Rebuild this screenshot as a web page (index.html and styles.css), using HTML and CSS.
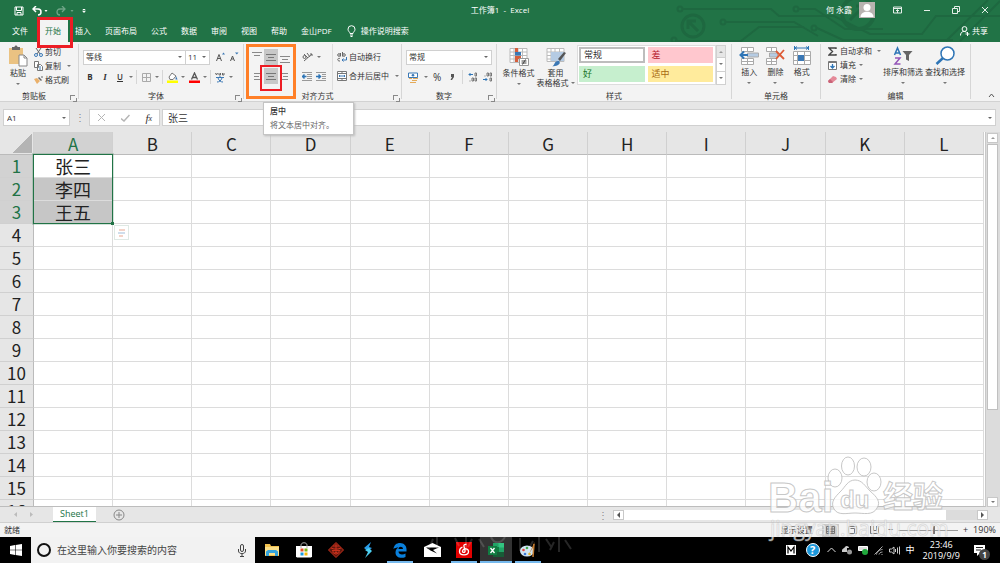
FILE: index.html
```html
<!DOCTYPE html>
<html lang="zh-CN">
<head>
<meta charset="utf-8">
<title>工作簿1 - Excel</title>
<link rel="stylesheet" href="styles.css">
</head>
<body>
<header class="top">
  <svg class="circuit" width="330" height="42" viewBox="0 0 330 42" fill="none" stroke="#1e6840" stroke-width="2">
    <circle cx="23" cy="26" r="11" stroke-width="3"/><path d="M28 31l-9-9M18 29v-8h8" stroke-width="3"/>
    <circle cx="10" cy="9" r="2.5"/><path d="M13 9h88l8 7h55l36 18h52l14-18h64"/>
    <circle cx="53" cy="22" r="2.5"/><path d="M56 22h68l24 14M5 41h66l18-14h45"/><circle cx="4" cy="40" r="2.5"/>
    <circle cx="126" cy="9" r="2.5"/><path d="M129 9h16l30 20h38"/><circle cx="144" cy="28" r="2.5"/>
    <circle cx="188" cy="13" r="16" stroke-width="4"/><path d="M180 20l13-13M186 6h8v8" stroke-width="3"/>
    <path d="M276 41l42-41M290 41l40-40M147 28l26 12h110"/>
  </svg>
  <div class="titlebar">
    <div class="quick">
      <button class="ib" aria-label="保存"><svg width="10" height="10" viewBox="0 0 10 10" fill="none" stroke="#fff"><path d="M1 1h8v8H1zM2.500 1v3.500h5V1M3 9V6.500h4V9"/></svg></button>
      <button class="ib" aria-label="撤消"><svg width="16" height="10" viewBox="0 0 16 10" fill="none" stroke="#fff" stroke-width="1.500"><path d="M4 0L1 3l3 3M1 3h5c4 0 4 6 0 6"/><path d="M12.500 4h3L14 6z" fill="#fff" stroke="none"/></svg></button>
      <button class="ib dim" aria-label="恢复"><svg width="18" height="10" viewBox="0 0 18 10" fill="none" stroke="#fff" stroke-width="1.300"><path d="M6 0l3 3-3 3M9 3H4C0 3 0 9 4 9"/><path d="M14.500 4h3L16 6z" fill="#fff" stroke="none"/></svg></button>
      <button class="ib" aria-label="自定义"><svg width="4" height="5" viewBox="0 0 5 6" fill="#fff"><path d="M1 0h3v1H1zM0 2h5L2.500 5z"/></svg></button>
    </div>
    <div class="doc">工作簿1&nbsp; -&nbsp; Excel</div>
    <div class="user">
      <span>何 永露</span>
      <svg width="16" height="16" viewBox="0 0 16 16"><path fill="#b8b3b0" d="M0 0h16v16H0z"/><circle cx="8" cy="5.500" r="3.500" fill="#fff"/><path d="M1.500 15c0-7 13-7 13 0z" fill="#fff"/></svg>
      <button class="ib" aria-label="功能区显示选项"><svg width="9" height="8" viewBox="0 0 9 8" fill="none" stroke="#e5efe9"><path d="M.5 1h8v6h-8zM.5 2.500h8M4.500 7V4M3 5l1.500-1.500L6 5"/></svg></button>
      <button class="ib" aria-label="最小化"><svg width="8" height="8" viewBox="0 0 8 8" stroke="#e5efe9"><path d="M1 4.500h6"/></svg></button>
      <button class="ib" aria-label="还原"><svg width="8" height="8" viewBox="0 0 8 8" fill="none" stroke="#e5efe9"><path d="M.5 2.500h5v5h-5zM2.500 2V.5h5v5H6"/></svg></button>
      <button class="ib" aria-label="关闭"><svg width="8" height="8" viewBox="0 0 8 8" stroke="#e5efe9"><path d="M1 1l6 6M7 1L1 7"/></svg></button>
    </div>
  </div>
  <nav class="tabs">
    <button class="tab">文件</button><button class="tab on">开始<i class="mark mark-tab"></i></button><button class="tab">插入</button><button class="tab">页面布局</button><button class="tab">公式</button><button class="tab">数据</button><button class="tab">审阅</button><button class="tab">视图</button><button class="tab">帮助</button><button class="tab">金山PDF</button>
    <button class="tab tell"><svg width="9" height="12" viewBox="0 0 9 12" fill="none" stroke="#fff"><path d="M3 8.500C3 7 1 6.500 1 4.200a3.500 3.500 0 017 0C8 6.500 6 7 6 8.500zM3 10h3M3.500 11.500h2"/></svg>操作说明搜索</button>
    <button class="tab share"><svg width="10" height="10" viewBox="0 0 10 10" fill="none" stroke="#fff"><circle cx="4.500" cy="3" r="2.400"/><path d="M.5 9.500c0-5 5-4.500 6-3M7.500 6v4M5.500 8h4"/></svg>共享</button>
  </nav>
</header>

<section class="ribbon">
  <div class="group g-clip">
    <div class="body">
      <button class="big paste"><svg width="20" height="22" viewBox="0 0 20 22"><path fill="#eac282" d="M1 3h14v16H1z"/><path fill="#666" d="M4 2h2.500c0-2 3-2 3 0H12v3H4z"/><path d="M11 10h5l3 3v8h-8z" fill="#fff" stroke="#888"/><path d="M16 10v3h3" fill="none" stroke="#888"/></svg><span>粘贴</span><b class="caret"></b></button>
      <div class="stack">
        <button class="row"><svg width="9" height="9" viewBox="0 0 9 9" fill="none" stroke="#666"><path d="M2 0l4 6M7 0L3 6"/><circle cx="2" cy="7" r="1.500" stroke="#3b78b5"/><circle cx="7" cy="7" r="1.500" stroke="#3b78b5"/></svg>剪切</button>
        <button class="row"><svg width="9" height="10" viewBox="0 0 9 10" fill="#fff" stroke="#777"><path d="M.5.5h4v6h-4zM3.500 3.500h3l2 2v4h-5z"/><path d="M5 6h2M5 8h2" stroke="#3b78b5"/></svg>复制<b class="caret"></b></button>
        <button class="row"><svg width="9" height="8" viewBox="0 0 9 8"><path fill="#eab06a" d="M0 3l3-1 3 3-3 3z"/><path fill="#666" d="M4 2l1-1 3 3-1 1zM7 1l1-1 1 1-1 1z"/></svg>格式刷</button>
      </div>
    </div>
    <div class="cap">剪贴板<i class="launch"></i></div>
  </div>

  <div class="group g-font">
    <div class="body col">
      <div class="line">
        <label class="sel fontname"><select aria-label="字体"><option>等线</option></select></label><label class="sel fontsize"><select aria-label="字号"><option>11</option></select></label>
        <button class="ib grow" aria-label="增大字号"><svg width="9" height="10" viewBox="0 0 9 10" fill="none" stroke="#555"><path d="M.5 9L3 2.500 5.500 9M1.500 6.500h3"/><path d="M6 2.500l1.500-2 1.500 2z" fill="#3b78b5" stroke="none"/></svg></button><button class="ib grow" aria-label="减小字号"><svg width="9" height="10" viewBox="0 0 9 10" fill="none" stroke="#555"><path d="M.5 9L2.500 4l2 5M1.500 7h2"/><path d="M5 .5h3.500L6.800 2.500z" fill="#3b78b5" stroke="none"/></svg></button>
      </div>
      <div class="line tools">
        <button class="ib bold">B</button><button class="ib ital">I</button><button class="ib under">U</button><b class="caret"></b><i class="vr"></i>
        <button class="ib" aria-label="边框"><svg width="9" height="9" viewBox="0 0 9 9" fill="none" stroke="#aaa"><path d="M.5.5h8v8h-8zM4.500 0v9M0 4.500h9"/></svg></button><b class="caret"></b><i class="vr"></i>
        <button class="ib" aria-label="填充颜色"><svg width="11" height="11" viewBox="0 0 11 11"><path d="M2 5l3-4 4 3-3 3.500H3z" fill="#fff" stroke="#777"/><path fill="#3b78b5" d="M9 4l1.500 3.500h-2z"/><path fill="#ff0" d="M0 8.500h11V11H0z"/></svg></button><b class="caret"></b>
        <button class="ib" aria-label="字体颜色"><svg width="11" height="11" viewBox="0 0 11 11"><path d="M2.500 7.500L5.500 1l3 6.500M3.500 5.500h4" fill="none" stroke="#555" stroke-width="1.300"/><path fill="#f00" d="M0 8.500h11V11H0z"/></svg></button><b class="caret"></b><i class="vr"></i>
        <button class="ib" aria-label="拼音"><svg width="10" height="11" viewBox="0 0 10 11" fill="none" stroke="#666"><path d="M.5 1l1 2 1-2M4 1v2h1.500V1M7.500 1v2H9V1"/><path d="M1 5.500h8M5 4v1.500M3 6c1 3 3 4 5 4M7 6c-1 3-3 4-5 4" stroke="#3b78b5"/></svg></button><b class="caret"></b>
      </div>
    </div>
    <div class="cap">字体<i class="launch"></i></div>
  </div>

  <div class="group g-align">
    <div class="body">
      <div class="pad">
        <i class="mark mark-box"></i>
        <button class="al" aria-label="顶端对齐"><svg width="10" height="12" viewBox="0 0 10 12" stroke="#888"><path d="M0 1.500h10M2 4.500h6"/></svg></button>
        <button class="al on" aria-label="垂直居中"><svg width="10" height="12" viewBox="0 0 10 12" stroke="#777"><path d="M0 3.500h10M2 6.500h6M0 9.500h10"/></svg></button>
        <button class="al" aria-label="底端对齐"><svg width="10" height="12" viewBox="0 0 10 12" stroke="#888"><path d="M0 5.500h10M2 8.500h6M0 11.500h10"/></svg></button>
        <button class="al" aria-label="左对齐"><svg width="10" height="12" viewBox="0 0 10 12" stroke="#888"><path d="M2 3.500h8M2 6.500h5M2 9.500h8"/></svg></button>
        <button class="al on" aria-label="居中" aria-describedby="tip"><svg width="10" height="12" viewBox="0 0 10 12" stroke="#777"><path d="M0 3.500h10M2 6.500h6M0 9.500h10"/></svg><i class="mark mark-center"></i></button>
        <button class="al" aria-label="右对齐"><svg width="10" height="12" viewBox="0 0 10 12" stroke="#888"><path d="M0 3.500h8M3 6.500h5M0 9.500h8"/></svg></button>
      </div>
      <div class="pair">
        <div class="line"><button class="ib" aria-label="方向"><svg width="11" height="10" viewBox="0 0 11 10" fill="none" stroke="#666"><circle cx="2.500" cy="5" r="1.500"/><path d="M2 2l4 4M5 1l3 4M2 9l8-7M8 2h2v2"/></svg></button><b class="caret"></b></div>
        <div class="line"><button class="ib" aria-label="减少缩进"><svg width="10" height="9" viewBox="0 0 10 9" stroke="#999" fill="none"><path d="M0 .5h10M5 2.500h5M5 4.500h5M5 6.500h5M0 8.500h10"/><path d="M4.500 4.500H1M2.500 2.500l-2 2 2 2" stroke="#2e75b6" stroke-width="1.500"/></svg></button><button class="ib" aria-label="增加缩进"><svg width="10" height="9" viewBox="0 0 10 9" stroke="#999" fill="none"><path d="M0 .5h10M6 2.500h4M6 4.500h4M6 6.500h4M0 8.500h10"/><path d="M0 4.500h4M2.500 2.500l2 2-2 2" stroke="#2e75b6" stroke-width="1.500"/></svg></button></div>
      </div>
      <div class="pair wrap">
        <button class="row"><svg width="10" height="10" viewBox="0 0 10 10" fill="none" stroke="#666"><circle cx="2" cy="3" r="1.300"/><path d="M3.500 1v3.500M5.500 0v4.500"/><circle cx="7" cy="3" r="1.300"/><path d="M3 6.500c-3-1-3 3 0 2.500"/><path d="M9.500 5v3H5M6.500 6.500L5 8l1.500 1.500" stroke="#3b78b5"/></svg>自动换行</button>
        <button class="row"><svg width="10" height="10" viewBox="0 0 10 10" fill="#fff" stroke="#777"><path d="M.5.500h9v9h-9zM.5 2.500h9M.5 7.500h9M5 0v2.500M5 7.500V10"/><path d="M2 5h6M3 4L2 5l1 1M7 4l1 1-1 1" stroke="#3b78b5" fill="none"/></svg>合并后居中<b class="caret"></b></button>
      </div>
    </div>
    <div class="cap">对齐方式<i class="launch"></i></div>
    <div class="tip" id="tip" role="tooltip"><strong>居中</strong><span>将文本居中对齐。</span></div>
  </div>

  <div class="group g-num">
    <div class="body col">
      <div class="line"><label class="sel numfmt"><select aria-label="数字格式"><option>常规</option></select></label></div>
      <div class="line tools">
        <button class="ib" aria-label="会计格式"><svg width="11" height="11" viewBox="0 0 11 11"><path d="M.5 1h9v4.500h-9z" fill="#fff" stroke="#3b78b5"/><circle cx="5" cy="3.200" r="1.300" fill="#3b78b5"/><path d="M5 6h5v1H5zM4 8h5v1H4zM2 10h6v1H2zM1 6h3v1H1z" fill="#e5ab5a"/></svg></button><b class="caret"></b>
        <button class="ib pct">%</button><button class="ib comma" aria-label="千位分隔样式"><svg width="4" height="6" viewBox="0 0 4 6"><path fill="#555" d="M1 0h3v3L2 6H.5L2 3H1z"/></svg></button><i class="vr"></i>
        <button class="ib" aria-label="增加小数位数"><svg width="10" height="10" viewBox="0 0 10 10" fill="none" stroke="#777"><path d="M5 2.500H1M2.500 1L1 2.500 2.500 4" stroke="#2e75b6"/><path d="M7 1h1.500v3H7zM4 6h1.500v3H4zM7 6h1.500v3H7zM1.500 9h1"/></svg></button>
        <button class="ib" aria-label="减少小数位数"><svg width="10" height="10" viewBox="0 0 10 10" fill="none" stroke="#777"><path d="M4 1h1.500v3H4zM7 1h1.500v3H7zM7 6h1.500v3H7zM1.500 4h1"/><path d="M0 7.500h4M2.500 6L4 7.500 2.500 9" stroke="#2e75b6"/></svg></button>
      </div>
    </div>
    <div class="cap">数字<i class="launch"></i></div>
  </div>

  <div class="group g-style">
    <div class="body">
      <button class="big"><svg width="20" height="20" viewBox="0 0 20 20"><path d="M1 1.500h17v14H1zM1 5h17M1 8.500h17M1 12h17M5 1v14M9 1v14M13.500 1v14" fill="#fff" stroke="#bbb"/><path fill="#d65f3c" d="M6 1h3v4H6zM6 9h6v3H6zM6 12h3v3H6z"/><path fill="#3b78b5" d="M6 5h6v3.500H6z"/><path d="M10.500 11.500h9v7h-9z" fill="#fff" stroke="#999"/><path d="M12.500 14h5M12.500 16h5M16.500 12.500l-3 5" stroke="#444"/></svg><span>条件格式</span><b class="caret"></b></button>
      <button class="big"><svg width="20" height="20" viewBox="0 0 20 20"><path d="M1 1.500h17v13H1zM1 5h17M1 8.500h17M1 12h17M5 1v13M9 1v13M13.500 1v13" fill="#fff" stroke="#bbb"/><path fill="#b5cbe3" d="M5 5h13v9H5z"/><path fill="#555" d="M18 5l2 1-6 8-2-2z"/><path fill="#3b78b5" d="M6 19c3 0 2-6 7-5 3 3-3 6-7 5z"/></svg><span>套用</span><span>表格格式<b class="caret"></b></span></button>
      <div class="gallery">
        <button class="st normal">常规</button><button class="st bad">差</button>
        <button class="st good">好</button><button class="st mid">适中</button>
      </div>
      <div class="spin"><button aria-label="上"><b class="caret up"></b></button><button aria-label="下"><b class="caret"></b></button><button aria-label="更多"><b class="caret bar"></b></button></div>
    </div>
    <div class="cap">样式</div>
  </div>

  <div class="group g-cells">
    <div class="body">
      <button class="big"><svg width="20" height="20" viewBox="0 0 20 20" fill="#fff" stroke="#aaa"><path d="M2.500 1.500h12v4h-12zM8.500 1v5M2.500 12.500h12v6h-12zM8.500 12v7M2.500 15.500h12"/><path d="M8.500 7h11v4h-11z" fill="#b5cbe3"/><path d="M9 9H2M5 5.500L1.500 9 5 12.500" stroke="#2e75b6" stroke-width="2" fill="none"/></svg><span>插入</span><b class="caret"></b></button>
      <button class="big"><svg width="20" height="20" viewBox="0 0 20 20" fill="#fff" stroke="#aaa"><path d="M1.500 1.500h10v4h-10zM6.500 1v5M1.500 12.500h10v6h-10zM6.500 12v7M1.500 15.500h10"/><path d="M4.500 7h8v4h-8z" fill="#b5cbe3"/><path d="M11 5l8 8M19 4l-8 9" stroke="#dd5a35" stroke-width="1.800"/></svg><span>删除</span><b class="caret"></b></button>
      <button class="big"><svg width="20" height="20" viewBox="0 0 20 20" fill="#fff" stroke="#aaa"><path d="M1.500 5.500h17v13h-17zM1 9.500h17M1 14.500h17M5.500 5v14M12.500 5v14"/><path fill="#3b78b5" stroke="none" d="M6 9h6v6H6z"/><path d="M2.500 0v4M16.500 0v4M3 2h13M5 .5L3 2l2 1.500M14 .5L16 2l-2 1.500" stroke="#2e75b6" fill="none"/></svg><span>格式</span><b class="caret"></b></button>
    </div>
    <div class="cap">单元格</div>
  </div>

  <div class="group g-edit">
    <div class="body">
      <div class="stack">
        <button class="row"><svg width="9" height="9" viewBox="0 0 9 9" fill="none" stroke="#444" stroke-width="1.400"><path d="M8 2V1H1l3.500 3.500L1 8h7V7"/></svg>自动求和<b class="caret wide"></b></button>
        <button class="row"><svg width="9" height="9" viewBox="0 0 9 9" fill="#fff" stroke="#777"><path d="M.5.5h8v8h-8zM.5 1.500h8"/><path d="M4.500 3v4M2.500 5l2 2 2-2" stroke="#2e75b6" fill="none" stroke-width="1.300"/></svg>填充<b class="caret"></b></button>
        <button class="row"><svg width="9" height="9" viewBox="0 0 9 9"><path fill="#e58a99" d="M0 6l5-5 3 1 1 2-5 4H1z"/><path fill="#c96478" d="M0 6l2-2 3 3-1 1H1z"/></svg>清除<b class="caret"></b></button>
      </div>
      <button class="big"><svg width="20" height="20" viewBox="0 0 20 20" fill="none" stroke-width="1.500"><path d="M1.500 9L4.500 2l3 7M2.500 7h4" stroke="#2e75b6"/><path d="M2 12h5l-5 6h5.500" stroke="#9455b8"/><path d="M9.500 5h10l-3.500 4v6l-3-1.500V9z" fill="#666"/></svg><span>排序和筛选</span><b class="caret"></b></button>
      <button class="big"><svg width="20" height="20" viewBox="0 0 20 20" fill="#fff"><circle cx="12.500" cy="7.500" r="6.500" stroke="#2e75b6" stroke-width="1.500"/><path d="M8 12l-6.500 6" stroke="#2e75b6" stroke-width="2.500"/></svg><span>查找和选择</span><b class="caret"></b></button>
    </div>
    <div class="cap">编辑</div>
  </div>
  <button class="ib fold" aria-label="折叠功能区"><svg width="7" height="5" viewBox="0 0 7 5" fill="none" stroke="#555"><path d="M1 4l2.500-3L6 4"/></svg></button>
</section>

<section class="formula">
  <label class="sel namebox"><input type="text" value="A1" aria-label="名称框"></label>
  <span class="dots">⋮</span>
  <div class="fx">
    <button class="ib" aria-label="取消"><svg width="9" height="9" viewBox="0 0 9 9" stroke="#b5b5b5"><path d="M1 1l7 7M8 1L1 8"/></svg></button>
    <button class="ib" aria-label="输入"><svg width="9" height="8" viewBox="0 0 9 8" fill="none" stroke="#b5b5b5" stroke-width="1.500"><path d="M0 4.500L3 7l5.500-6"/></svg></button>
    <button class="ib fn">f<small>x</small></button>
  </div>
  <label class="sel content"><input type="text" value="张三" aria-label="编辑栏"></label>
</section>

<main class="sheet">
  <div class="grid">
    <table>
      <thead><tr id="cols"><th class="corner"></th></tr></thead>
      <tbody id="rows"></tbody>
    </table>
  </div>
  <div class="vscroll"><button aria-label="向上"><b class="caret up"></b></button><i class="thumb"></i><button aria-label="向下"><b class="caret"></b></button></div>
</main>

<footer class="sheetbar">
  <button class="ib nav" aria-label="上一张"><svg width="4" height="5" viewBox="0 0 4 5"><path fill="#bbb" d="M3 0v5L0 2.500z"/></svg></button><button class="ib nav" aria-label="下一张"><svg width="4" height="5" viewBox="0 0 4 5"><path fill="#bbb" d="M1 0v5l3-2.500z"/></svg></button>
  <button class="sheettab">Sheet1</button>
  <button class="ib add" aria-label="新工作表"><svg width="12" height="12" viewBox="0 0 12 12" fill="none" stroke="#888"><circle cx="6" cy="6" r="5"/><path d="M6 3v6M3 6h6"/></svg></button>
  <span class="dots">⋮</span>
  <div class="hscroll"><button aria-label="向左"><b class="caret left"></b></button><i class="thumb"></i><button aria-label="向右"><b class="caret right"></b></button></div>
</footer>
<footer class="status">
  <span>就绪</span>
  <div class="views">
    <span>显示设置</span>
    <button class="ib view on" aria-label="普通"><svg width="9" height="8" viewBox="0 0 9 8" fill="none" stroke="#777"><path d="M.5.5h8v7h-8zM.5 3h8M.5 5.500h8M3 0v8M6 0v8"/></svg></button>
    <button class="ib view" aria-label="页面布局"><svg width="9" height="8" viewBox="0 0 9 8" fill="none" stroke="#777"><path d="M.5.5h8v7h-8zM2.500 2.500h4v5h-4"/></svg></button>
    <button class="ib view" aria-label="分页预览"><svg width="9" height="8" viewBox="0 0 9 8" fill="none" stroke="#777"><path d="M.5 0v7.500h8V0M3.500 0v4.500h3V0"/></svg></button>
    <button class="ib zoom">−</button><input type="range" aria-label="缩放" min="10" max="400" value="245"><button class="ib zoom">+</button><span class="pc">190%</span>
  </div>
</footer>

<footer class="taskbar">
  <button class="start" aria-label="开始"><svg width="12" height="12" viewBox="0 0 12 12" fill="#fff"><path d="M0 2l5-1v4.700H0zM5.600.9L12 0v5.700H5.600zM0 6.300h5V11l-5-1zM5.600 6.300H12V12l-6.400-.9z"/></svg></button>
  <label class="search"><svg width="16" height="16" viewBox="0 0 16 16" fill="none" stroke="#111" stroke-width="2"><circle cx="8" cy="8" r="6"/></svg><input type="text" placeholder="在这里输入你要搜索的内容" aria-label="搜索"><svg width="8" height="13" viewBox="0 0 8 13" fill="none" stroke="#444"><rect x="2.500" y=".5" width="3" height="7" rx="1.500"/><path d="M.5 5v2c0 3.500 7 3.500 7 0V5M4 10v2.500M2 12.500h4"/></svg></label>
  <div class="apps">
    <button class="app" aria-label="文件资源管理器"><svg width="16" height="16" viewBox="0 0 16 16"><path fill="#f2c14e" d="M1 2h5l1 2h8v10H1z"/><path fill="#fbe08a" d="M1 5h14v8H1z"/><path fill="#35a4dd" d="M2 14V9.500L4 8h8l2 1.500V14h-3v-3H5v3z"/></svg></button>
    <button class="app" aria-label="应用商店"><svg width="16" height="16" viewBox="0 0 16 16"><path fill="#fff" d="M0 4h16v10.500l-1 1H1l-1-1z"/><path d="M5 6V3c0-3 6-3 6 0v3" fill="none" stroke="#aaa"/><path fill="#e8502a" d="M4.500 6.500h3v3h-3z"/><path fill="#7cb518" d="M8.500 6.500h3v3h-3z"/><path fill="#1b9de0" d="M4.500 10.500h3v3h-3z"/><path fill="#f7b90b" d="M8.500 10.500h3v3h-3z"/></svg></button>
    <button class="app" aria-label="应用"><svg width="16" height="16" viewBox="0 0 16 16" fill="none" stroke="#c8311c"><path fill="#5e170d" d="M8 .5L15.500 8 8 15.500.5 8z"/><path d="M3 6l3 1h4l3-1M4 8.500h8M5 8v3h6V8M8 2v11M5 4h6M6 12l2-2 2 2"/></svg></button>
    <button class="app" aria-label="应用"><svg width="16" height="16" viewBox="0 0 16 16"><path fill="#2a9de8" d="M11 0L4 6l4 3 4-3-3-1z"/><path fill="#4dd0f2" d="M5 16l7-7-3-3-4 2 3 2z"/></svg></button>
    <button class="app run" aria-label="Edge"><svg width="16" height="16" viewBox="0 0 16 16"><path fill="#0a80dc" d="M1.500 7C2 3 4.500 1 8 1c4 0 6.500 3 6.500 6v2.500h-8c0 3.500 4.500 3.500 7 2V15c-4 1.800-10 1-10-4.500C3.500 8 5 6 6.500 5.500 4.500 5.500 2.500 6 1.500 7zm5 0H11c0-3-4.500-3-4.500 0z"/></svg></button>
    <button class="app" aria-label="邮件"><svg width="17" height="14" viewBox="0 0 17 14"><path fill="#fff" d="M0 4l8.500-4L17 4v10H0z"/><path fill="#000" d="M2 4.500h13L9 7l4 3.500L6.500 7.500z"/></svg></button>
    <button class="app run" aria-label="网易云音乐"><svg width="16" height="16" viewBox="0 0 16 16"><path fill="#e20000" d="M0 0h16v16H0z"/><path d="M10.500 2.500C8.500 2 7.500 3 8 4.500l1 4c.5 2.800-3 2.300-2.500.3C7.200 6 12.500 6 12.500 9.500c0 4.500-9 4.500-9 0C3.500 7 5 5.500 6.500 5" fill="none" stroke="#fff" stroke-width="1.300"/></svg></button>
    <button class="app run now" aria-label="Excel"><svg width="16" height="14" viewBox="0 0 16 14"><path fill="#21a366" d="M5 0h11v14H5z"/><path fill="#33c481" d="M10.500 0H16v4.500h-5.500z"/><path fill="#185c37" d="M5 9h11v5H5z"/><path fill="#107c41" d="M0 3h9v9H0zM5 4h6v5H5z"/><path d="M2.500 5l4 5M6.500 5l-4 5" stroke="#fff" stroke-width="1.300"/></svg></button>
    <button class="app run" aria-label="画图"><svg width="16" height="16" viewBox="0 0 16 16"><ellipse cx="7" cy="9" rx="7" ry="5.500" fill="#cfe3f2"/><circle cx="3.500" cy="8" r="1.300" fill="#e2483a"/><circle cx="7" cy="6" r="1.300" fill="#46a84a"/><circle cx="5" cy="12" r="1.300" fill="#3b78d5"/><circle cx="9.500" cy="12" r="1.300" fill="#e8b52a"/><path d="M14.500 0L9 12l5-8z" fill="#c57d33"/><path d="M14 2l-1 13" stroke="#c57d33" stroke-width="1.500"/></svg></button>
    <svg class="ghost" width="150" height="20" viewBox="0 0 150 20" fill="none" stroke="#fff" stroke-opacity=".15" stroke-width="2"><path d="M6 2L1 14M10 0v15M28 1l4 8M39 0v14M45 2l-4 8M52 2l5 8M64 0c3 7 10 7 14 0M93 1v13M112 0v15M106 4l-5 9M119 2l6 9M132 0v15M127 5l-4 8M138 3l6 9"/></svg>
  </div>
  <div class="tray">
    <svg width="10" height="10" viewBox="0 0 10 10"><path fill="#fff" d="M0 0h10v10H0z"/><path d="M2 8.500V2l3 4 3-4v6.500" fill="none" stroke="#000" stroke-width="1.200"/></svg>
    <span class="help">?</span>
    <svg width="9" height="6" viewBox="0 0 9 6" fill="none" stroke="#ddd"><path d="M.5 5l4-4 4 4"/></svg>
    <svg width="10" height="10" viewBox="0 0 10 10"><path fill="#ccc" d="M0 6c0-3 2-2 3-4s4-1 4 1H5v4H0z"/><circle cx="7.500" cy="7" r="2.500" fill="#999"/></svg>
    <svg width="10" height="10" viewBox="0 0 10 10"><path d="M.5 1.500h9v4h-9z" fill="#ddd" stroke="#fff"/><circle cx="7" cy="7" r="3" fill="#20a83c"/></svg>
    <svg width="9" height="9" viewBox="0 0 9 9" fill="none" stroke="#aaa"><path d="M.5 8.500L8.500.5M2.500 8.500c0-2 3-5 6-5M5 8.500c0-1 1.500-2.500 3.500-2.500M7.500 8.500h1"/></svg>
    <svg width="11" height="9" viewBox="0 0 11 9" fill="none" stroke="#ccc"><path d="M.5 3h2L5 1v7L2.500 6h-2zM6.500 3v3M8.500 1.500v6M10.500.5v8"/></svg>
    <span class="ime">中</span>
    <div class="clock"><span>23:46</span><span>2019/9/9</span></div>
    <div class="note"><svg width="11" height="11" viewBox="0 0 11 11"><path fill="#fff" d="M0 0h11v8H6l-3 3V8H0z"/><path d="M2 2.500h7M2 5h5" stroke="#222"/></svg><b class="badge">1</b></div>
  </div>
</footer>

<svg class="watermark" width="182" height="92" viewBox="0 0 182 92" aria-label="Baidu经验">
  <g fill="#fff" fill-opacity=".8" stroke="#b9b9b9" stroke-opacity=".8">
    <ellipse cx="67" cy="31" rx="7" ry="9"/><ellipse cx="80" cy="19" rx="6.500" ry="9"/><ellipse cx="96" cy="20" rx="7" ry="9"/><ellipse cx="106" cy="35" rx="7" ry="9"/>
    <path d="M87 33c7 0 10 6 15 11 7 6 11 11 7 17-4 8-14 5-22 5s-17 3-21-4c-4-7 1-12 7-18 4-4 7-11 14-11z"/>
    <text class="w1" x="0" y="65">Bai</text><text class="w2" x="72" y="61">du</text><text class="w3" x="115" y="60">经验</text>
  </g>
  <text class="w4" x="2" y="89">jingyan.baidu.com</text>
</svg>
<script src="app.js"></script>
</body>
</html>
```
FILE: app.js
```js
const names = ['张三', '李四', '王五'];
const letters = 'ABCDEFGHIJKL';
const cols = document.getElementById('cols');
const rows = document.getElementById('rows');

for (const letter of letters) {
  const th = document.createElement('th');
  th.textContent = letter;
  if (letter === 'A') th.className = 'sel-head';
  cols.append(th);
}

for (let r = 1; r <= 16; r++) {
  const tr = rows.insertRow();
  const th = document.createElement('th');
  th.textContent = r;
  if (r <= 3) th.className = 'sel-head';
  tr.append(th);
  for (let c = 0; c < letters.length; c++) {
    const td = tr.insertCell();
    if (c === 0 && r <= 3) {
      td.textContent = names[r - 1];
      td.className = r === 1 ? 'active' : 'picked';
    }
    if (c === 0 && r === 1) {
      const box = document.createElement('i');
      box.className = 'range';
      td.append(box);
    }
    if (c === 1 && r === 4) {
      td.innerHTML = '<button class="quickan" aria-label="快速分析"><svg width="8" height="8" viewBox="0 0 8 8"><path fill="#f3d3c8" d="M1 0h6v2H1zM1 6h4v2H1z"/><path fill="#cfdeec" d="M0 3h7v2H0z"/></svg></button>';
    }
  }
}
```
FILE: styles.css
```css
* { box-sizing: border-box; }

body {
  margin: 0;
  height: 100vh;
  display: flex;
  flex-direction: column;
  overflow: hidden;
  position: relative;
  background: #e6e6e6;
  color: #333;
  font: 8px/12px "Open Sans", "Noto Sans CJK SC", sans-serif;
}

button, input, select {
  font: inherit;
  color: inherit;
  background: none;
  border: 0;
  padding: 0;
  margin: 0;
  outline: 0;
}

button { white-space: nowrap; }
svg { flex: none; display: block; }

.ib {
  display: flex;
  align-items: center;
  justify-content: center;
}

.caret {
  flex: none;
  display: inline-block;
  border: 2px solid transparent;
  border-top-color: #777;
  border-bottom: 0;
}
.caret.up { border-top: 0; border-bottom: 2px solid #999; }
.caret.left { border: 3px solid transparent; border-right-color: #555; border-left: 0; }
.caret.right { border: 3px solid transparent; border-left-color: #555; border-right: 0; }
.caret.bar { box-shadow: 0 -2px 0 -1px #666; }

/* title bar and tabs */
.top {
  position: relative;
  background: #217346;
  color: #fff;
  height: 42px;
  flex: none;
}
.circuit { position: absolute; right: 0; top: 0; }
.titlebar {
  position: relative;
  display: grid;
  grid-template-columns: 1fr auto 1fr;
  align-items: center;
  height: 20px;
}
.quick { display: flex; align-items: center; gap: 8px; padding: 2px 0 0 14px; }
.dim { opacity: .35; }
.user { display: flex; align-items: center; justify-content: flex-end; gap: 21px; padding-right: 11px; }
.user > span { margin-right: -14px; }
.user > svg { margin-right: -3px; }
.tabs { position: relative; display: flex; height: 22px; padding-left: 5px; }
.tab { padding: 0 7px; }
.tab.on { position: relative; background: #f3f3f3; color: #217346; }
.tab:first-child { padding-right: 10px; }
.tell { display: flex; align-items: center; gap: 5px; padding-left: 8px; }
.share { display: flex; align-items: center; gap: 2px; margin-left: auto; padding-right: 12px; }

.mark { position: absolute; border: 3px solid #ed1c24; pointer-events: none; z-index: 3; }
.mark-tab { inset: -3px -5px -6px -1px; }
.mark-box { inset: 0; border-color: #ff7f27; }
.mark-center { inset: -3px -4px -7px; border-width: 2px; }

/* ribbon */
.ribbon {
  display: flex;
  flex: none;
  height: 60px;
  background: #f3f3f3;
  border-bottom: 1px solid #d2d2d2;
}
.group {
  position: relative;
  display: flex;
  flex-direction: column;
  border-right: 1px solid #d6d6d6;
  margin: 2px 0;
}
.body { display: flex; height: 46px; flex: none; }
.body.col { flex-direction: column; gap: 4px; padding-top: 5px; }
.cap { position: relative; text-align: center; line-height: 12px; }
.launch {
  position: absolute;
  right: 3px;
  top: 5px;
  width: 5px;
  height: 5px;
  border: 1px solid #888;
  border-right: 0;
  border-bottom: 0;
}
.launch::after {
  content: "";
  position: absolute;
  left: 2px;
  top: 2px;
  width: 3px;
  height: 3px;
  border: 1px solid #888;
  border-left: 0;
  border-top: 0;
}
.g-clip { width: 79px; }
.g-font { width: 165px; }
.g-align { width: 158px; }
.g-num { width: 95px; }
.g-style { width: 235px; }
.g-cells { width: 89px; }
.g-edit { width: 150px; }
.g-clip .cap, .g-font .cap, .g-align .cap, .g-num .cap { padding-right: 10px; }

.big { display: flex; flex-direction: column; align-items: center; line-height: 10px; padding-top: 2px; }
.big > .caret { margin-top: 5px; }
.big > svg + span { padding-top: 1px; }
.big span .caret { margin: 0 0 2px 2px; }
.paste { width: 34px; padding: 1px 0 0 2px; }
.stack { display: flex; flex-direction: column; padding-top: 2px; gap: 2px; }
.row { display: flex; align-items: center; gap: 2px; height: 12px; }
.row .caret { margin-left: 4px; }
.line { display: flex; align-items: center; height: 16px; }

.sel { position: relative; display: flex; background: #fff; border: 1px solid #d0d0d0; }
.sel select, .sel input { appearance: none; width: 100%; padding-left: 2px; }
.sel::after {
  content: "";
  position: absolute;
  right: 3px;
  top: 50%;
  margin-top: -1px;
  border: 2px solid transparent;
  border-top-color: #666;
  border-bottom: 0;
}
.sel.fontname { width: 103px; height: 15px; }
.sel.fontsize { width: 25px; height: 15px; margin-left: -1px; margin-right: 3px; }
.sel.numfmt { width: 86px; height: 15px; }
.g-font .body { padding-left: 4px; }
.grow { width: 14px; }
.tools { gap: 3px; }
.g-font .tools { padding-left: 1px; }
.g-font .tools .ib { min-width: 12px; }
.bold { font-weight: 700; }
.ital { font-style: italic; font-weight: 600; font-family: "Liberation Serif", serif; font-size: 9px; }
.under { text-decoration: underline; font-weight: 600; }
.vr { width: 1px; height: 14px; background: #d6d6d6; }

.g-align .body { padding-left: 2px; gap: 6px; }
.pad {
  position: relative;
  display: grid;
  flex: none;
  grid-template-columns: repeat(3, 14px);
  grid-template-rows: 16px 16px;
  gap: 3px 0;
  padding: 5px 4px;
  width: 50px;
  height: 55px;
}
.al { position: relative; display: flex; align-items: center; justify-content: center; }
.al.on { background: #c8c8c8; }
.pair { display: flex; flex-direction: column; gap: 3px; padding-top: 5px; }
.pair .line { gap: 4px; }
.pair.wrap { border-left: 1px solid #ddd; padding-left: 4px; }
.pair.wrap .row { height: 16px; }

.g-num .body { padding-left: 4px; }
.g-num .tools { gap: 5px; padding-left: 2px; }
.pct { font-size: 10px; }
.comma { min-width: 11px; }

.g-style .body { padding: 1px 5px 0 3px; }
.g-style .big { width: 37px; }
.gallery {
  display: grid;
  grid-template-columns: 1fr 1fr;
  grid-template-rows: 1fr 1fr;
  gap: 3px;
  flex: 1;
  height: 40px;
  padding: 1px 2px 2px 1px;
  margin-left: 3px;
  background: #fff;
  border: 1px solid #ddd;
}
.st { text-align: left; padding-left: 3px; font-size: 9px; border: 1px solid transparent; }
.normal { border: 2px solid #bdbdbd; }
.bad { background: #ffc7ce; color: #b5182b; }
.good { background: #c6efce; color: #17751f; }
.mid { background: #ffeb9c; color: #a86a10; }
.spin { display: grid; grid-template-rows: repeat(3, 1fr); width: 10px; height: 40px; }
.spin button { display: flex; align-items: center; justify-content: center; background: #fff; border: 1px solid #d0d0d0; margin-top: -1px; }
.spin button:first-child { background: #e6e6e6; margin-top: 0; }

.g-cells .body { padding: 0 5px 0 4px; justify-content: space-between; }
.g-cells .big { width: 27px; }
.g-edit .body { padding-left: 7px; }
.g-edit .row { gap: 3px; }
.g-edit .row .caret { margin-left: 0; }
.g-edit .row .caret.wide { margin-left: 2px; }
.g-edit .big { width: 42px; }
.g-edit .stack { width: 54px; padding-top: 1px; }
.fold { margin: auto 5px 3px auto; }

.tip {
  position: absolute;
  left: 19px;
  top: 58px;
  width: 91px;
  height: 33px;
  z-index: 5;
  display: flex;
  flex-direction: column;
  gap: 2px;
  padding: 2px 6px;
  background: #fff;
  border: 1px solid #c4c4c4;
  box-shadow: 1px 1px 2px #bbb;
  white-space: nowrap;
}
.tip strong { font-weight: 500; }
.tip span { color: #666; }

/* formula bar */
.formula { display: flex; flex: none; height: 30px; padding: 7px 4px 6px 3px; }
.namebox { width: 67px; }
.namebox input { padding-left: 3px; }
.dots { width: 19px; text-align: center; color: #888; line-height: 16px; font-size: 10px; }
.fx { display: flex; justify-content: space-between; width: 71px; margin-right: 2px; padding: 0 7px; background: #fff; border: 1px solid #d0d0d0; }
.fn { font: italic 11px/14px "Liberation Serif", serif; }
.fn small { font-size: 8px; padding-top: 3px; }
.content { flex: 1; }
.content input { font-size: 10px; padding-left: 5px; }

/* worksheet */
.sheet { flex: 1; min-height: 0; display: flex; background: #e6e6e6; }
.grid { flex: 1; min-width: 0; overflow: hidden; background: #fff; border-right: 1px solid #c8c8c8; border-bottom: 1px solid #bdbdbd; }
.grid table { width: 100%; table-layout: fixed; border-collapse: separate; border-spacing: 0; font: 18px/22px "Noto Sans CJK SC", sans-serif; color: #222; padding-right: 1px; }
.grid th { font-size: 17px; font-weight: 400; line-height: 22px; padding: 0; height: 23px; background: #e6e6e6; border-right: 1px solid #bbb; border-bottom: 1px solid #d0d0d0; }
.grid thead th { line-height: 20px; padding-top: 2px; border-right-color: #d0d0d0; border-bottom-color: #bbb; }
.grid td { position: relative; height: 23px; padding: 0; text-align: center; line-height: 22px; border-right: 1px solid #dcdcdc; border-bottom: 1px solid #dcdcdc; }
.grid .corner { width: 34px; background: linear-gradient(135deg, #e6e6e6 50%, #b4b4b4 50%) right 1px bottom 1px / 20px 19px no-repeat #e6e6e6; }
.grid .sel-head { background: #d2d2d2; color: #217346; }
.grid .picked { background: #c6c6c6; }
.range { position: absolute; left: -1px; top: -1px; width: calc(100% + 2px); height: 70px; z-index: 1; border: 1px solid #217346; box-shadow: 0 0 0 1px #21734633; }
.range::after { content: ""; position: absolute; right: -2px; bottom: -2px; width: 3px; height: 3px; background: #217346; }
.quickan { position: absolute; left: 1px; top: 1px; width: 15px; height: 15px; display: flex; align-items: center; justify-content: center; background: #fff; border: 1px solid #dfe9e4; }
.vscroll { display: flex; flex-direction: column; width: 14px; padding: 1px 2px 0 1px; background: #dcdcdc; }
.vscroll button, .hscroll button { display: flex; align-items: center; justify-content: center; background: #fff; border: 1px solid #c8c8c8; width: 11px; height: 10px; flex: none; }
.vscroll .thumb { flex: none; height: 71%; background: #fff; border: 1px solid #c0c0c0; margin: 1px 0 auto; }

.sheetbar { display: flex; flex: none; align-items: center; height: 16px; padding-right: 12px; border-bottom: 1px solid #d0d0d0; }
.nav { width: 15px; }
.nav:first-child { margin-left: 8px; }
.sheettab { width: 43px; height: 15px; margin: 0 17px 1px 15px; background: #fff; color: #217346; font-size: 9px; border-bottom: 1px solid #217346; }
.sheetbar .dots { margin-left: auto; }
.hscroll { display: flex; align-items: center; width: 38%; background: #dcdcdc; }
.hscroll .thumb { width: 86%; height: 10px; background: #fff; margin-right: auto; }

.status { display: flex; flex: none; align-items: center; justify-content: space-between; height: 14px; padding: 0 4px; background: #f3f3f3; }
.views { display: flex; align-items: center; gap: 5px; }
.view { width: 17px; height: 13px; }
.view.on { background: #ccc; margin-left: 4px; }
.zoom, .pc { font-size: 9px; }
.views input { appearance: none; width: 60px; height: 1px; background: #999; }
.views input::-webkit-slider-thumb { appearance: none; width: 2px; height: 8px; background: #777; }

/* taskbar */
.taskbar { display: flex; flex: none; height: 26px; background: #000; color: #fff; }
.start { display: flex; align-items: center; justify-content: center; width: 31px; }
.search { display: flex; align-items: center; width: 224px; padding: 0 9px 0 5px; gap: 5px; background: #f2f2f2; color: #333; font-size: 10px; }
.search input { flex: 1; min-width: 0; }
.search input::placeholder { color: #444; opacity: 1; }
.apps { position: relative; display: flex; padding-left: 1px; }
.app { display: flex; align-items: center; justify-content: center; width: 26px; margin: 0 3px; padding-top: 2px; border-bottom: 2px solid transparent; }
.app.run { border-bottom-color: #76b9ed; }
.app.now { background: #333; width: 32px; margin: 0; }
.ghost { position: absolute; left: 172px; top: 0; pointer-events: none; }
.tray { display: flex; align-items: center; gap: 6px; margin-left: auto; padding-right: 9px; }
.tray .help { width: 14px; height: 14px; margin: 0 1px 0 4px; border: 1px solid #fff; border-radius: 50%; background: #1b98dc; font-size: 11px; line-height: 12px; font-weight: 700; text-align: center; }
.ime { font-size: 9px; }
.clock { display: flex; flex-direction: column; align-items: center; font-size: 9px; line-height: 11px; margin-left: 2px; }
.note { position: relative; margin: 0 6px 0 8px; }
.badge { position: absolute; left: 5px; top: 4px; width: 11px; height: 11px; border-radius: 50%; background: #444; line-height: 11px; text-align: center; }

.watermark { position: absolute; right: 50px; bottom: 24px; z-index: 6; pointer-events: none; overflow: visible; }
.w1 { font: 700 42px "Liberation Sans", sans-serif; }
.w2 { font: 700 24px "Liberation Sans", sans-serif; }
.w3 { font: 700 30px "Noto Sans CJK SC", sans-serif; }
.w4 { font: 21px "Open Sans", sans-serif; fill: #fff; fill-opacity: .7; stroke: #aaa; stroke-opacity: .35; }
```
